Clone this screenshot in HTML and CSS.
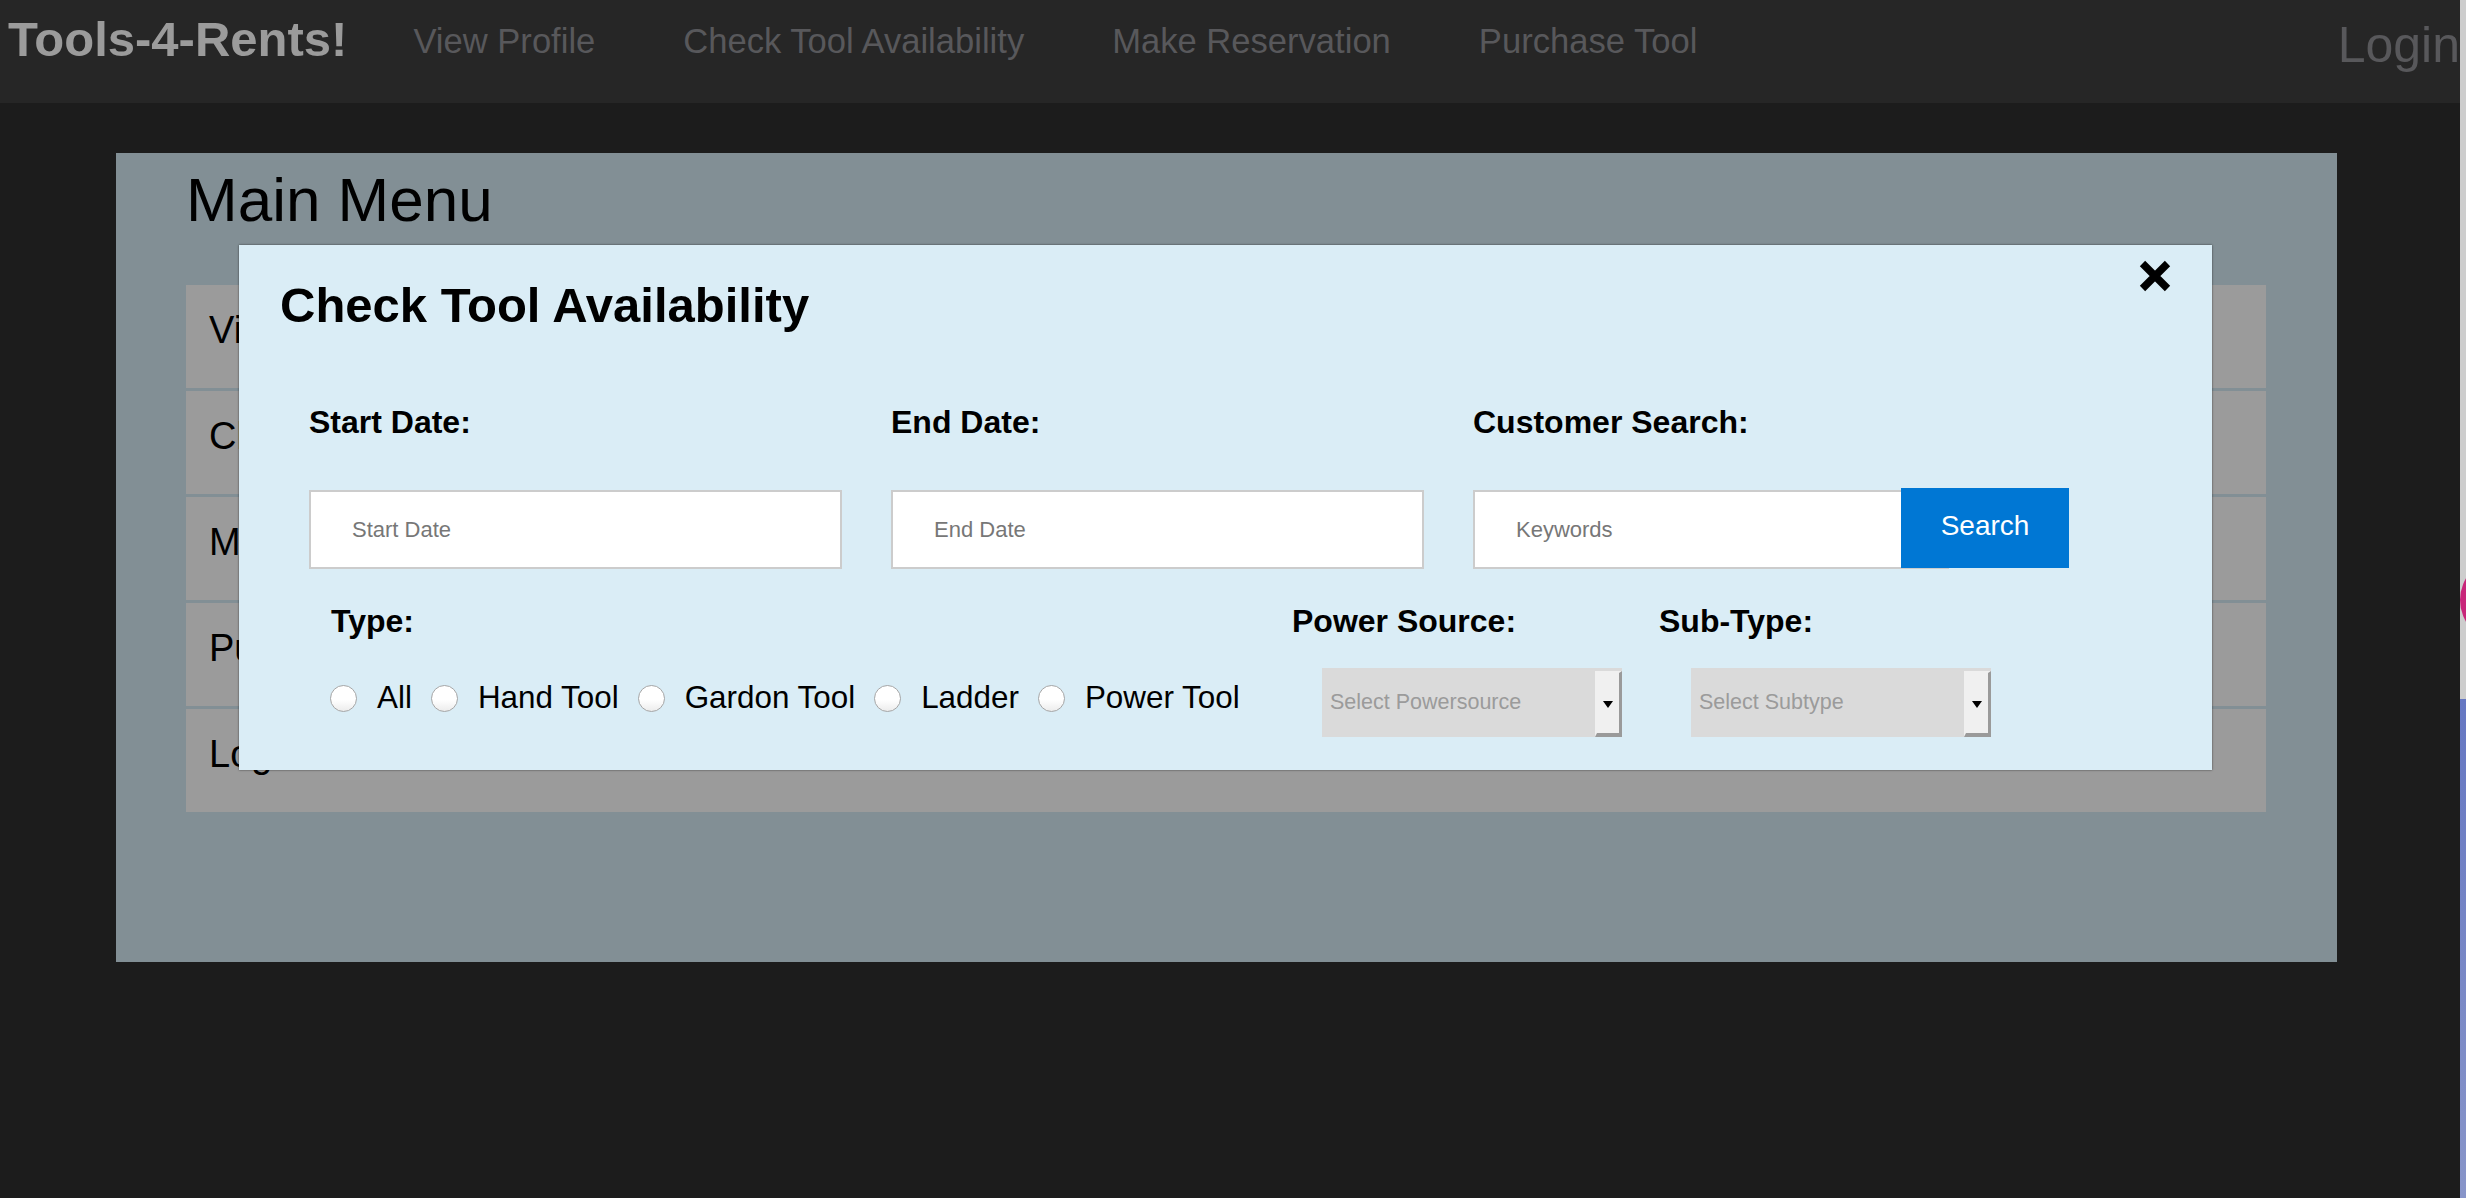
FILE: index.html
```html
<!DOCTYPE html>
<html lang="en">
<head>
<meta charset="utf-8">
<title>Tools-4-Rents!</title>
<link rel="stylesheet" href="styles.css">
</head>
<body>
<div class="page">
  <nav class="navbar">
    <div class="brand">Tools-4-Rents!</div>
    <div class="nav-links">
      <a class="nav-link">View Profile</a>
      <a class="nav-link">Check Tool Availability</a>
      <a class="nav-link">Make Reservation</a>
      <a class="nav-link">Purchase Tool</a>
    </div>
    <a class="login">Login</a>
  </nav>

  <main class="panel">
    <h1 class="panel-title">Main Menu</h1>
    <div class="menu-list">
      <div class="menu-item">View Profile</div>
      <div class="menu-item">Check Tool Availability</div>
      <div class="menu-item">Make Reservation</div>
      <div class="menu-item">Purchase Tool</div>
      <div class="menu-item">Logout</div>
    </div>
  </main>

  <section class="modal">
    <h2 class="modal-title">Check Tool Availability</h2>
    <svg class="close" viewBox="0 0 32 32" width="32" height="32">
      <path d="M3.5 3.5 L28.5 28.5 M28.5 3.5 L3.5 28.5" stroke="#000" stroke-width="7.5" stroke-linecap="butt" fill="none"/>
    </svg>
    <div class="form">
      <div class="row-top">
        <div class="field">
          <div class="field-label">Start Date:</div>
          <input class="input" type="text" placeholder="Start Date">
        </div>
        <div class="field">
          <div class="field-label">End Date:</div>
          <input class="input" type="text" placeholder="End Date">
        </div>
        <div class="field field-wide">
          <div class="field-label">Customer Search:</div>
          <div class="search-row">
            <input class="input input-search" type="text" placeholder="Keywords">
            <button class="search-btn" type="button">Search</button>
          </div>
        </div>
      </div>
      <div class="row-bottom">
        <div class="group group-type">
          <div class="field-label">Type:</div>
          <div class="radios">
            <label class="radio-opt"><input type="radio" name="type" class="radio">All</label>
            <label class="radio-opt"><input type="radio" name="type" class="radio">Hand Tool</label>
            <label class="radio-opt"><input type="radio" name="type" class="radio">Gardon Tool</label>
            <label class="radio-opt"><input type="radio" name="type" class="radio">Ladder</label>
            <label class="radio-opt"><input type="radio" name="type" class="radio">Power Tool</label>
          </div>
        </div>
        <div class="group group-power">
          <div class="field-label">Power Source:</div>
          <div class="select select-power">
            <span class="select-text">Select Powersource</span>
            <span class="select-btn"><span class="tri"></span></span>
          </div>
        </div>
        <div class="group group-sub">
          <div class="field-label">Sub-Type:</div>
          <div class="select select-sub">
            <span class="select-text">Select Subtype</span>
            <span class="select-btn"><span class="tri"></span></span>
          </div>
        </div>
      </div>
    </div>
  </section>
</div>
<div class="strip">
  <div class="strip-gray"><div class="strip-blob"></div></div>
  <div class="strip-blue"></div>
</div>
</body>
</html>
```
FILE: styles.css
```css
* { box-sizing: border-box; }
html, body { margin: 0; padding: 0; }
body {
  background: #1c1c1c;
  font-family: "Liberation Sans", Arial, sans-serif;
  color: #000;
  display: flex;
  width: 2466px;
  height: 1198px;
  overflow: hidden;
}
.page {
  width: 2460px;
  flex: none;
  position: relative;
  overflow: hidden;
}

/* navbar */
.navbar {
  height: 103px;
  background: #262626;
  display: flex;
  align-items: flex-start;
  padding-left: 8px;
}
.brand {
  font-size: 49px;
  line-height: 49px;
  font-weight: bold;
  color: #9b9b9b;
  margin-top: 15px;
}
.nav-links {
  display: flex;
  gap: 88px;
  margin-left: 66px;
  margin-top: 24px;
}
.nav-link {
  font-size: 34.6px;
  line-height: 34px;
  color: #58585b;
}
.login {
  margin-left: auto;
  font-size: 50px;
  line-height: 50px;
  color: #58585b;
  margin-top: 20px;
}

/* main panel */
.panel {
  display: block;
  margin: 50px 0 0 116px;
  width: 2221px;
  background: #828f95;
  padding: 16px 71px 150px 70px;
}
.panel-title {
  margin: 0;
  font-size: 62px;
  line-height: 62px;
  font-weight: normal;
}
.menu-list {
  margin-top: 54px;
  display: flex;
  flex-direction: column;
  gap: 3px;
}
.menu-item {
  height: 103px;
  background: #9b9b9b;
  display: flex;
  align-items: center;
  padding: 0 0 12px 23px;
  font-size: 38px;
}

/* modal */
.modal {
  position: absolute;
  left: 239px;
  top: 245px;
  width: 1973px;
  height: 525px;
  background: #daedf6;
  box-shadow: 0 0 2px rgba(0, 0, 0, 0.6);
  padding: 36px 41px 0 41px;
}
.modal-title {
  margin: 0;
  font-size: 49px;
  line-height: 49px;
  font-weight: bold;
}
.close {
  position: absolute;
  top: 15px;
  right: 41px;
}
.form { margin-left: 29px; }
.row-top {
  display: flex;
  gap: 49px;
  margin-top: 76px;
}
.field {
  width: 533px;
  display: flex;
  flex-direction: column;
}
.field-wide { width: 596px; }
.field-label {
  font-size: 32px;
  line-height: 32px;
  font-weight: bold;
}
.input {
  margin: 52px 0 0 0;
  height: 79px;
  border: 2px solid #cccccc;
  background: #fff;
  padding: 0 0 0 41px;
  font-family: "Liberation Sans", Arial, sans-serif;
  font-size: 22px;
  outline: none;
}
.input::placeholder { color: #777777; }
.search-row {
  display: flex;
  align-items: flex-start;
  margin-top: 52px;
}
.input-search {
  margin: 0;
  width: 476px;
}
.search-btn {
  position: relative;
  margin: -2px 0 0 -48px;
  width: 168px;
  height: 80px;
  border: none;
  background: #0077d4;
  color: #fff;
  font-family: "Liberation Sans", Arial, sans-serif;
  font-size: 28px;
  padding: 0 0 4px 0;
}

.row-bottom {
  display: flex;
  margin-top: 36px;
}
.group { display: flex; flex-direction: column; }
.group-type { width: 961px; margin-left: 22px; }
.group-power { width: 367px; }
.radios {
  margin-top: 41px;
  height: 40px;
  display: flex;
  align-items: center;
  gap: 19px;
  margin-left: -1px;
}
.radio-opt {
  display: flex;
  align-items: center;
  gap: 20px;
  font-size: 31.4px;
}
.radio {
  appearance: none;
  -webkit-appearance: none;
  margin: 0;
  width: 27px;
  height: 27px;
  border-radius: 50%;
  border: 1px solid #a6a6a6;
  background: linear-gradient(#ffffff 55%, #ececec);
}
.select {
  margin-top: 31px;
  width: 300px;
  height: 69px;
  background: #dadada;
  display: flex;
  align-items: stretch;
  justify-content: space-between;
}
.select-power { margin-left: 30px; }
.select-sub { margin-left: 32px; }
.select-text {
  align-self: center;
  padding: 0 0 0 8px;
  font-size: 21.5px;
  color: #9b9b9b;
}
.select-btn {
  margin-top: 3px;
  width: 27px;
  background: #f0f0f0;
  border-style: solid;
  border-width: 2px 3px 4px 2px;
  border-color: #f0f0f0 #9a9a9a #9a9a9a #f0f0f0;
  display: flex;
  align-items: center;
  justify-content: center;
}
.tri {
  width: 0;
  height: 0;
  border-left: 5px solid transparent;
  border-right: 5px solid transparent;
  border-top: 7px solid #000;
  margin-top: 2px;
}

/* right-edge strip */
.strip {
  width: 6px;
  flex: none;
  display: flex;
  flex-direction: column;
}
.strip-gray {
  height: 699px;
  background: #cdcdcd;
  position: relative;
  overflow: hidden;
}
.strip-blob {
  position: absolute;
  left: 0;
  top: 558px;
  width: 84px;
  height: 84px;
  border-radius: 50%;
  background: #c8267a;
}
.strip-blue {
  flex: 1;
  background: linear-gradient(#6577c2, #8895c9);
}
```
